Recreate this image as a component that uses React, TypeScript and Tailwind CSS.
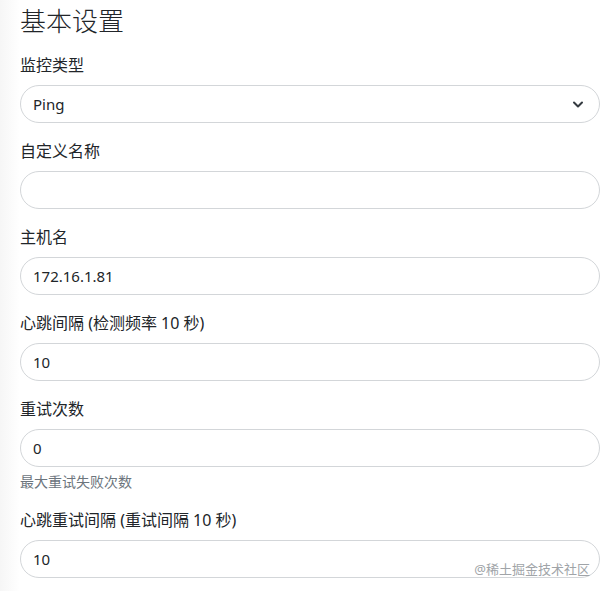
import React from "react";

const font = {
    fontFamily: '"Noto Sans", "Noto Sans CJK SC", sans-serif',
};

interface FieldProps {
    label: string;
    value?: string;
    help?: string;
    select?: boolean;
}

function Field({ label, value = "", help, select = false }: FieldProps) {
    return (
        <div className="mt-4 first:mt-0">
            <div className="mb-2 h-6 text-[16px] leading-6 text-[#212529]">{label}</div>
            <div className="relative flex h-[38px] items-center rounded-full border border-[#d3d6d9] bg-white pl-3 pr-4">
                <span className="text-[15px] leading-6 text-[#212529]">{value}</span>
                {select && (
                    <svg
                        className="absolute right-[15px] top-[14px]"
                        width="12"
                        height="9"
                        viewBox="0 0 12 9"
                        fill="none"
                        stroke="#343a40"
                        strokeWidth="2"
                        strokeLinecap="round"
                        strokeLinejoin="round"
                    >
                        <path d="M2 2.5l4 4 4-4" />
                    </svg>
                )}
            </div>
            {help && <div className="mt-1 h-[21px] text-[14px] leading-[21px] text-[#6c757d]">{help}</div>}
        </div>
    );
}

export default function App() {
    return (
        <div className="relative flex h-[591px] w-[607px] overflow-hidden bg-white" style={font}>
            <div className="w-5 shrink-0 bg-gradient-to-r from-[#f6f6f6] to-white" />
            <div className="w-[580px] pt-[5px]">
                <h2 className="mb-4 h-8 text-[26px] leading-8 font-light text-[#212529]">基本设置</h2>
                <Field label="监控类型" value="Ping" select />
                <Field label="自定义名称" />
                <Field label="主机名" value="172.16.1.81" />
                <Field label="心跳间隔 (检测频率 10 秒)" value="10" />
                <Field label="重试次数" value="0" help="最大重试失败次数" />
                <Field label="心跳重试间隔 (重试间隔 10 秒)" value="10" />
            </div>
            <div className="absolute right-[17px] bottom-[14px] text-[13px] leading-4 text-[#a0a4a8]">
                @稀土掘金技术社区
            </div>
        </div>
    );
}
